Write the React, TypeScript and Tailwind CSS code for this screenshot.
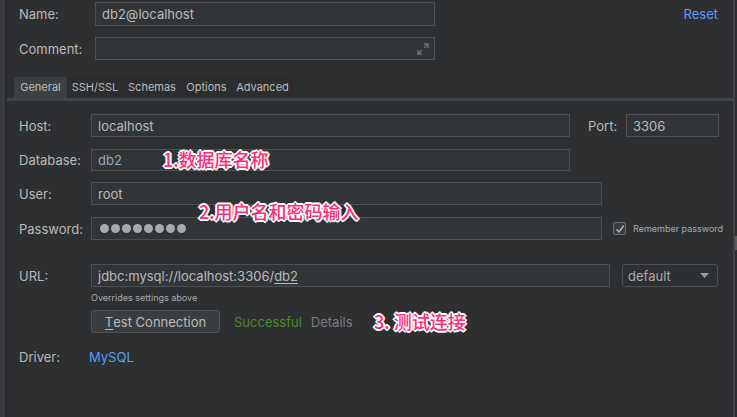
import React from "react";

const font = { fontFamily: "Inter, 'Noto Sans', 'Noto Sans CJK SC', sans-serif" };
const anno =
  "absolute z-10 text-[18px] font-medium text-[#ff2d74] [font-family:'Noto_Sans_CJK_SC',sans-serif] [text-shadow:1px_1px_0_#fff,-1px_-1px_0_#fff,1px_-1px_0_#fff,-1px_1px_0_#fff,2px_0_0_#fff,-2px_0_0_#fff,0_2px_0_#fff,0_-2px_0_#fff] whitespace-nowrap leading-none";

function Field({ w, h = 23, children, className = "" }: { w: number; h?: number; children?: React.ReactNode; className?: string }) {
  return (
    <div
      className={"relative flex items-center border border-[#4e5153] bg-[#323538] pl-[6px] pt-[2px] text-[13px] text-[#bbbbbb] " + className}
      style={{ width: w, height: h }}
    >
      {children}
    </div>
  );
}

const lbl = "pl-[12px] pt-[2px] text-[13px] text-[#bbbbbb]";

export default function App() {
  return (
    <div className="relative flex h-[417px] w-[737px] overflow-hidden bg-[#2e2f31]" style={font}>
      {/* left strip */}
      <div className="flex h-full w-[7px] shrink-0">
        <div className="h-full w-[5px] bg-[#393b3e]" />
        <div className="h-full w-[2px] bg-[#28292b]" />
      </div>

      {/* main */}
      <div className="relative flex h-full w-[726px] flex-col">
        {/* Name */}
        <div className="mt-[2px] flex h-[24px] items-center">
          <div className={"w-[88px] " + lbl}>Name:</div>
          <Field w={340} h={24}>db2@localhost</Field>
          <div className="ml-auto mr-[15px] pt-[2px] text-[13px] text-[#589df6]">Reset</div>
        </div>
        {/* Comment */}
        <div className="mt-[11px] flex h-[23px] items-center">
          <div className={"w-[88px] " + lbl}>Comment:</div>
          <Field w={340}>
            <svg className="absolute right-[4px] top-[4px]" width="14" height="14" viewBox="0 0 14 14">
              <path d="M8 2h4v4M12 2L8 6" stroke="#6a6d70" strokeWidth="1.6" fill="none" />
              <path d="M6 12H2V8M2 12l4-4" stroke="#6a6d70" strokeWidth="1.6" fill="none" />
            </svg>
          </Field>
        </div>
        {/* Tabs */}
        <div className="mt-[16px] flex h-[22px] pl-[7px] pt-[1px] text-[11px] text-[#bbbbbb]">
          <div className="flex w-[53px] items-center justify-center border border-[#3d4043] bg-[#3d4043]">General</div>
          <div className="flex w-[56px] items-center justify-center border border-[#2a2b2d] bg-[#2c2d2f]">SSH/SSL</div>
          <div className="flex w-[58px] items-center justify-center border border-[#2a2b2d] bg-[#2c2d2f]">Schemas</div>
          <div className="flex w-[51px] items-center justify-center border border-[#2a2b2d] bg-[#2c2d2f]">Options</div>
          <div className="flex w-[61px] items-center justify-center border border-[#2a2b2d] bg-[#2c2d2f]">Advanced</div>
        </div>
        <div className="h-[3px] w-full bg-[#404346]" />

        {/* Host */}
        <div className="mt-[13px] flex h-[23px] items-center">
          <div className={"w-[84px] " + lbl}>Host:</div>
          <Field w={479}>localhost</Field>
          <div className="ml-[18px] w-[38px] pt-[2px] text-[13px] text-[#bbbbbb]">Port:</div>
          <Field w={93}>3306</Field>
        </div>
        {/* Database */}
        <div className="relative mt-[12px] flex h-[22px] items-center">
          <div className={"w-[84px] " + lbl}>Database:</div>
          <Field w={479} h={22}>
            <span className="text-[#9aa8b8]">db2</span>
          </Field>
          <div className={anno} style={{ left: 156, top: 1 }}>1.数据库名称</div>
        </div>
        {/* User */}
        <div className="relative mt-[11px] flex h-[23px] items-center">
          <div className={"w-[84px] " + lbl}>User:</div>
          <Field w={511}>root</Field>
          <div className={anno} style={{ left: 192, top: 20 }}>2.用户名和密码输入</div>
        </div>
        {/* Password */}
        <div className="mt-[12px] flex h-[23px] items-center">
          <div className={"w-[84px] " + lbl}>Password:</div>
          <Field w={511} className="!pt-0">
            <div className="flex gap-[2px] pl-[2px]">
              {Array.from({ length: 8 }).map((_, i) => (
                <div key={i} className="h-[9px] w-[9px] rounded-full bg-[#a9a9a9]" />
              ))}
            </div>
          </Field>
          <div className="ml-[11px] flex h-[13px] w-[13px] items-center justify-center rounded-[2px] border border-[#6b6e70] bg-[#3a3d40]">
            <svg width="10" height="10" viewBox="0 0 10 10">
              <path d="M1.5 5.2L4 8L8.7 1.5" stroke="#bbbbbb" strokeWidth="1.3" fill="none" />
            </svg>
          </div>
          <div className="ml-[7px] pt-[1px] text-[9px] text-[#a9abad]">Remember password</div>
        </div>
        {/* URL */}
        <div className="mt-[24px] flex h-[23px] items-center">
          <div className={"w-[84px] " + lbl}>URL:</div>
          <Field w={519}>
            jdbc:mysql://localhost:3306/<span className="underline underline-offset-2">db2</span>
          </Field>
          <div className="ml-[12px] flex h-[23px] w-[96px] items-center justify-between rounded-[3px] border border-[#4e5153] pl-[5px] pr-[8px] text-[13px] text-[#a9abad]">
            <span className="pt-[2px]">default</span>
            <svg width="9" height="6" viewBox="0 0 9 6">
              <path d="M0 0h9L4.5 5z" fill="#9a9c9e" />
            </svg>
          </div>
        </div>
        <div className="mt-[4px] pl-[84px] pt-[1px] text-[9px] leading-[12px] text-[#a9abad]">Overrides settings above</div>
        {/* Test connection */}
        <div className="relative mt-[6px] flex h-[23px] items-center pl-[84px]">
          <div className="flex h-[23px] w-[129px] items-center justify-center rounded-[3px] border border-[#4f5254] bg-[#3a3d40] pt-[2px] text-[13px] text-[#bbbbbb]">
            <span className="underline underline-offset-2">T</span>est Connection
          </div>
          <div className="ml-[14px] pt-[2px] text-[13px] text-[#4a8a2c]">Successful</div>
          <div className="ml-[9px] pt-[2px] text-[13px] text-[#7a7c7e]">Details</div>
          <div className={anno} style={{ left: 367, top: 2 }}>3. 测试连接</div>
        </div>
        {/* Driver */}
        <div className="mt-[13px] flex items-center">
          <div className={"w-[82px] " + lbl}>Driver:</div>
          <div className="pt-[2px] text-[13px] text-[#589df6]">MySQL</div>
        </div>
      </div>

      {/* right strip */}
      <div className="relative flex h-full w-[4px] shrink-0">
        <div className="h-full w-[2px] bg-[#414346]" />
        <div className="h-full w-[2px] bg-[#2e2f31]" />
        <div className="absolute left-[2px] top-[236px] h-[14px] w-[2px] bg-[#5a5c5e]" />
      </div>
    </div>
  );
}
